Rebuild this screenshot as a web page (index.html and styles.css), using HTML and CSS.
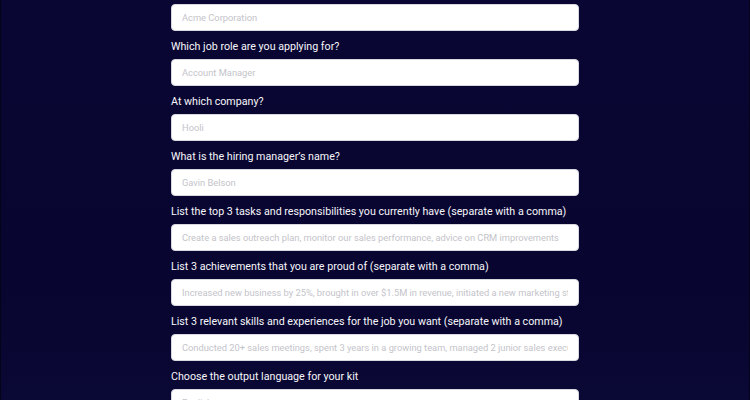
FILE: index.html
```html
<!DOCTYPE html>
<html lang="en">
<head>
    <meta charset="UTF-8">
    <meta name="viewport" content="width=device-width, initial-scale=1.0">
    <title>Job kit</title>
    <link rel="stylesheet" href="styles.css">
</head>
<body>
    <form class="kit-form" action="">
        <div class="field first">
            <input type="text" class="text-input" placeholder="Acme Corporation">
        </div>
        <div class="field">
            <label class="field-label">Which job role are you applying for?</label>
            <input type="text" class="text-input" placeholder="Account Manager">
        </div>
        <div class="field">
            <label class="field-label">At which company?</label>
            <input type="text" class="text-input" placeholder="Hooli">
        </div>
        <div class="field">
            <label class="field-label">What is the hiring manager’s name?</label>
            <input type="text" class="text-input" placeholder="Gavin Belson">
        </div>
        <div class="field">
            <label class="field-label">List the top 3 tasks and responsibilities you currently have (separate with a comma)</label>
            <input type="text" class="text-input" placeholder="Create a sales outreach plan, monitor our sales performance, advice on CRM improvements">
        </div>
        <div class="field">
            <label class="field-label">List 3 achievements that you are proud of (separate with a comma)</label>
            <input type="text" class="text-input" placeholder="Increased new business by 25%, brought in over $1.5M in revenue, initiated a new marketing strategy">
        </div>
        <div class="field">
            <label class="field-label">List 3 relevant skills and experiences for the job you want (separate with a comma)</label>
            <input type="text" class="text-input" placeholder="Conducted 20+ sales meetings, spent 3 years in a growing team, managed 2 junior sales executives">
        </div>
        <div class="field">
            <label class="field-label">Choose the output language for your kit</label>
            <div class="select-wrap">
                <select class="text-input select-input">
                    <option>English</option>
                    <option>French</option>
                    <option>German</option>
                </select>
                <svg class="chevron" width="10" height="10" viewBox="0 0 10 10">
                    <path d="M2 3.5 L5 6.5 L8 3.5" fill="none" stroke="#b8b8c0" stroke-width="1.3"/>
                </svg>
            </div>
        </div>
    </form>
</body>
</html>
```

FILE: styles.css
```css
body{
    margin: 0;
    height: 400px;
    overflow: hidden;
    background: linear-gradient(#0a0633, #080530 70%, #0a0834);
    border-left: 1px solid #050318;
    border-right: 1px solid #050318;
    font-family: Roboto, "Liberation Sans", sans-serif;
}
.kit-form{
    width: 408px;
    margin: 0 auto;
    padding-top: 4px;
    display: flex;
    flex-direction: column;
}
.field{
    display: flex;
    flex-direction: column;
}
.field-label{
    color: #f6f6fa;
    font-size: 10.7px;
    line-height: 15px;
    margin: 8px 0 5px;
}
.text-input{
    box-sizing: border-box;
    height: 27px;
    width: 100%;
    border: 1px solid #d8d8e0;
    border-radius: 4px;
    background: #fff;
    padding: 0 10px;
    font-family: Roboto, "Liberation Sans", sans-serif;
    font-size: 9.3px;
    color: #333;
    outline: none;
}
.text-input::placeholder{
    color: #c4c4ca;
}
.select-wrap{
    position: relative;
}
.select-input{
    appearance: none;
    -webkit-appearance: none;
    color: #c4c4ca;
}
.chevron{
    position: absolute;
    right: 9px;
    top: 9px;
}
```
